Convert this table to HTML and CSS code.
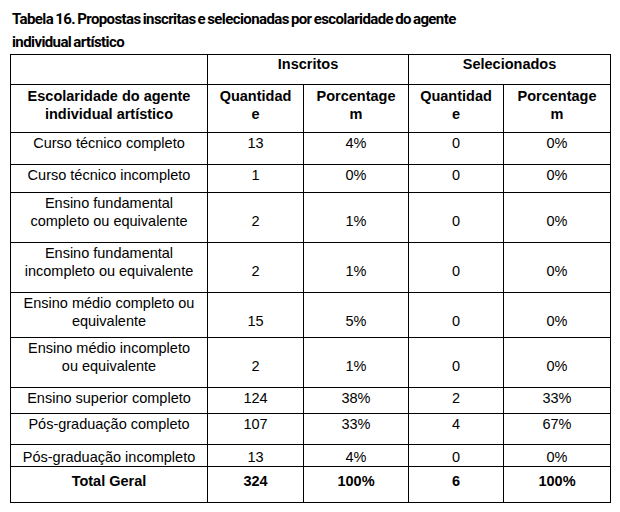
FILE: index.html
```html
<html lang="pt-BR">
<head>
    <meta charset="UTF-8">
    <title>Tabela 16</title>
    <link rel="stylesheet" href="styles.css">
</head>
<body>
    <div class="caption">Tabela 16. Propostas inscritas e selecionadas por escolaridade do agente individual artístico</div>
    <table class="data">
        <colgroup>
            <col class="c-label">
            <col class="c-qtd">
            <col class="c-pct">
            <col class="c-qtd2">
            <col class="c-pct2">
        </colgroup>
        <thead>
            <tr class="group">
                <th></th>
                <th colspan="2">Inscritos</th>
                <th colspan="2">Selecionados</th>
            </tr>
            <tr class="sub">
                <th>Escolaridade do agente individual artístico</th>
                <th>Quantidad<br>e</th>
                <th>Porcentage<br>m</th>
                <th>Quantidad<br>e</th>
                <th>Porcentage<br>m</th>
            </tr>
        </thead>
        <tbody>
            <tr class="r1">
                <td>Curso técnico completo</td>
                <td>13</td><td>4%</td><td>0</td><td>0%</td>
            </tr>
            <tr class="r2">
                <td>Curso técnico incompleto</td>
                <td>1</td><td>0%</td><td>0</td><td>0%</td>
            </tr>
            <tr class="two">
                <td>Ensino fundamental completo ou equivalente</td>
                <td>2</td><td>1%</td><td>0</td><td>0%</td>
            </tr>
            <tr class="two">
                <td>Ensino fundamental incompleto ou equivalente</td>
                <td>2</td><td>1%</td><td>0</td><td>0%</td>
            </tr>
            <tr class="two r5">
                <td>Ensino médio completo ou equivalente</td>
                <td>15</td><td>5%</td><td>0</td><td>0%</td>
            </tr>
            <tr class="two r6">
                <td>Ensino médio incompleto ou equivalente</td>
                <td>2</td><td>1%</td><td>0</td><td>0%</td>
            </tr>
            <tr class="r7">
                <td>Ensino superior completo</td>
                <td>124</td><td>38%</td><td>2</td><td>33%</td>
            </tr>
            <tr class="r8">
                <td>Pós-graduação completo</td>
                <td>107</td><td>33%</td><td>4</td><td>67%</td>
            </tr>
            <tr class="r9">
                <td>Pós-graduação incompleto</td>
                <td>13</td><td>4%</td><td>0</td><td>0%</td>
            </tr>
            <tr class="total">
                <td>Total Geral</td>
                <td>324</td><td>100%</td><td>6</td><td>100%</td>
            </tr>
        </tbody>
    </table>
</body>
</html>
```
FILE: styles.css
```css
body {
    margin: 0;
    padding: 8px 10px;
    background: #fff;
    color: #000;
    font-family: "Liberation Sans", Arial, sans-serif;
}
.caption {
    font-family: Roboto, "Liberation Sans", sans-serif;
    font-weight: 700;
    font-size: 15px;
    letter-spacing: -0.6px;
    word-spacing: -1px;
    line-height: 23px;
    padding-left: 2px;
    width: 500px;
}
.data {
    border-collapse: collapse;
    table-layout: fixed;
    width: 601px;
    font-size: 14.5px;
    line-height: 18px;
}
.c-label { width: 197px; }
.c-qtd { width: 96px; }
.c-pct { width: 105px; }
.c-qtd2 { width: 95px; }
.c-pct2 { width: 107px; }
.data th,
.data td {
    border: 1px solid #000;
    padding: 1px 4px 0;
    text-align: center;
    vertical-align: top;
}
.data td:first-child {
    padding-left: 7px;
    padding-right: 7px;
}
.data th {
    font-weight: 700;
}
.group th { height: 30px; padding-top: 0; }
.sub th { height: 48px; padding-top: 2px; }
.r1 { height: 32px; }
.r2 { height: 28px; }
.two { height: 50px; }
.r5 { height: 45px; }
.r6 { height: 50px; }
.r7 { height: 26px; }
.r8 { height: 31px; }
.r9 { height: 22px; }
.total { height: 36px; }
.two td + td {
    padding-top: 19px;
}
.total td {
    font-weight: 700;
    padding-top: 5px;
}
.r9 td { padding-top: 3px; }
```
